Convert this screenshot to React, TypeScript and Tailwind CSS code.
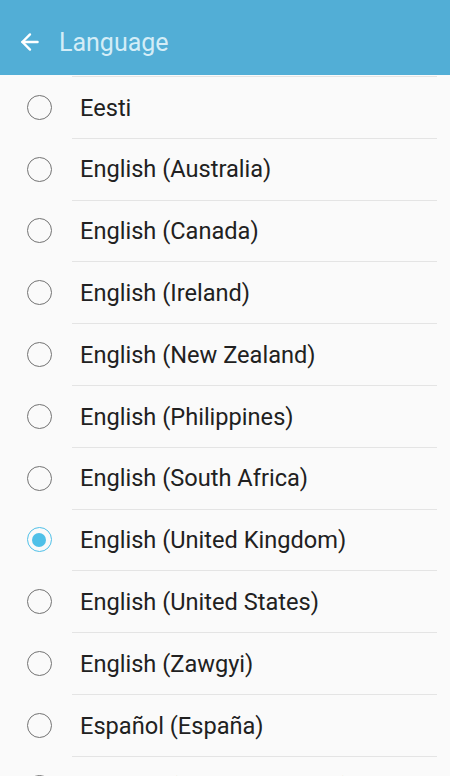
import { ArrowLeft } from "lucide-react";

const languages = [
  "Eesti",
  "English (Australia)",
  "English (Canada)",
  "English (Ireland)",
  "English (New Zealand)",
  "English (Philippines)",
  "English (South Africa)",
  "English (United Kingdom)",
  "English (United States)",
  "English (Zawgyi)",
  "Español (España)",
  "Español (Estados Unidos)",
];

function Radio({ checked }: { checked: boolean }) {
  if (checked) {
    return (
      <span className="flex h-[25px] w-[25px] items-center justify-center rounded-full border-[1.5px] border-[#4fc0e8]">
        <span className="h-[14px] w-[14px] rounded-full bg-[#4fc0e8]" />
      </span>
    );
  }
  return <span className="block h-[25px] w-[25px] rounded-full border-[1.5px] border-[#737373]" />;
}

export default function App() {
  const selected = "English (United Kingdom)";

  return (
    <div className="h-[776px] w-[450px] overflow-hidden bg-[#fafafa] font-['Roboto',sans-serif]">
      <header className="flex h-[75px] items-center bg-[#52aed6] pl-[17px] pt-[9px]">
        <ArrowLeft className="h-[26px] w-[26px] text-white" strokeWidth={2.2} />
        <h1 className="ml-[16px] text-[25px] leading-none text-[#d4edf7]">Language</h1>
      </header>
      <ul className="border-t border-transparent">
        {languages.map((lang) => (
          <li key={lang} className="flex h-[61.8px] items-center">
            <div className="flex w-[80px] shrink-0 justify-center pr-[2px] pt-[1px]">
              <Radio checked={lang === selected} />
            </div>
            <div className="-ml-[8px] mr-[13px] flex h-full flex-1 items-center border-t border-[#e4e4e4] pl-[8px] pt-[2px]">
              <span className="text-[23.6px] leading-none text-[#212121]">{lang}</span>
            </div>
          </li>
        ))}
      </ul>
    </div>
  );
}
